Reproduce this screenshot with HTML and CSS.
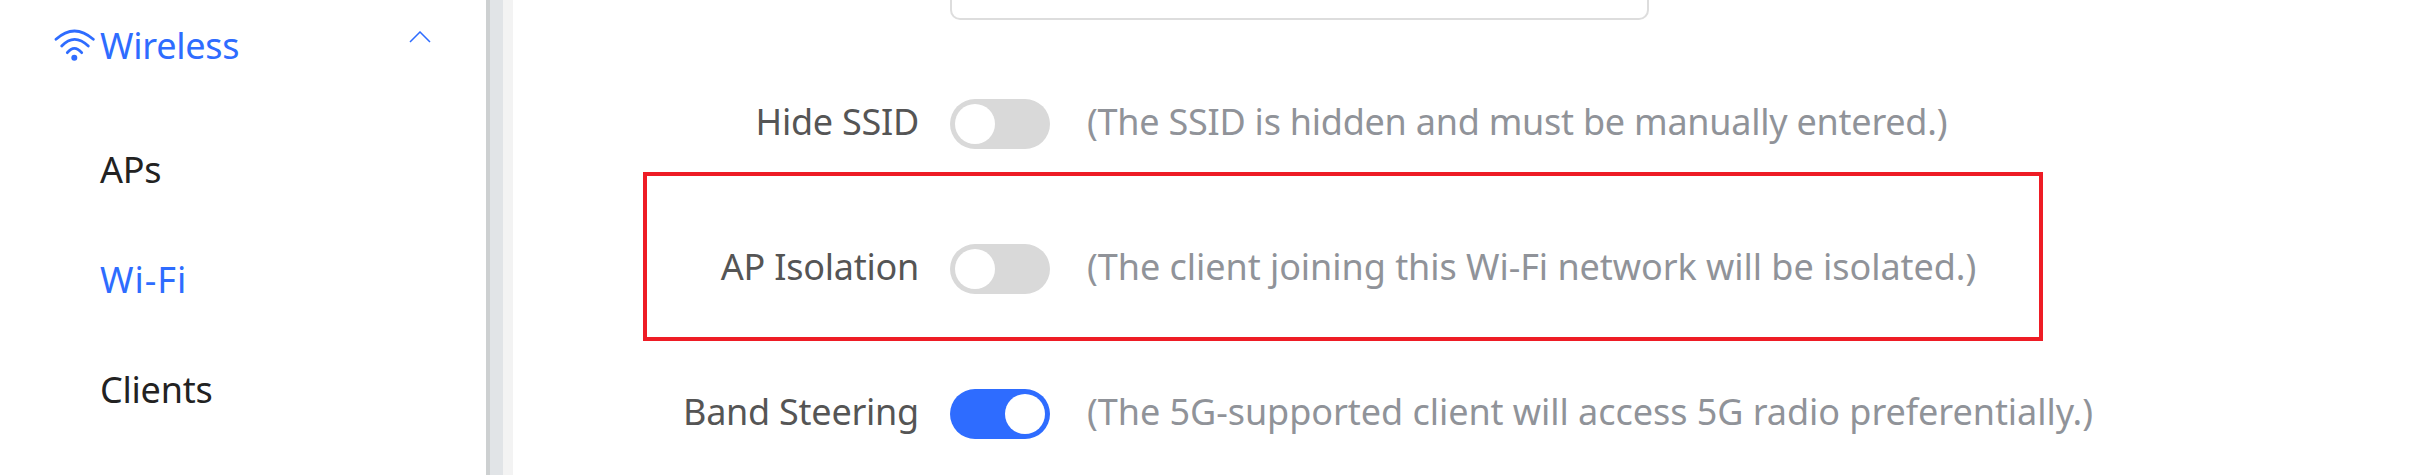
FILE: index.html
```html
<!DOCTYPE html>
<html lang="en">
<head>
  <meta charset="UTF-8" />
  <meta name="viewport" content="width=device-width, initial-scale=1.0" />
  <title>Wi-Fi</title>
  <link rel="stylesheet" href="styles.css">
</head>
<body>
  <div class="layout">
    <nav class="sidebar">
      <div class="nav-head">
        <svg class="wifi-icon" viewBox="0 0 42 32" fill="none" stroke="currentColor" stroke-width="2.8" stroke-linecap="round">
          <path d="M2 10.3Q20.3 -6.3 39.3 10.3" />
          <path d="M7.7 17Q20.3 3.6 34.3 17" />
          <path d="M13.3 23.7Q20.3 15 27.7 23.7" />
          <circle cx="20.3" cy="28.7" r="3" fill="currentColor" stroke="none" />
        </svg>
        <span>Wireless</span>
        <svg class="chevron" viewBox="0 0 22 12" fill="none" stroke="currentColor" stroke-width="1.5">
          <path d="M1 11L11 1L21 11" />
        </svg>
      </div>
      <a class="nav-item">APs</a>
      <a class="nav-item active">Wi-Fi</a>
      <a class="nav-item">Clients</a>
    </nav>
    <div class="rail"></div>
    <main class="content">
      <div class="ssid-input"></div>
      <div class="form-rows">
        <div class="form-row">
          <label>Hide SSID</label>
          <span class="switch"></span>
          <p class="hint tight">(The SSID is hidden and must be manually entered.)</p>
        </div>
        <div class="form-row">
          <label>AP Isolation</label>
          <span class="switch"></span>
          <p class="hint">(The client joining this Wi-Fi network will be isolated.)</p>
        </div>
        <div class="form-row">
          <label>Band Steering</label>
          <span class="switch on"></span>
          <p class="hint">(The 5G-supported client will access 5G radio preferentially.)</p>
        </div>
      </div>
      <div class="highlight"></div>
    </main>
  </div>
</body>
</html>
```

FILE: styles.css
```css
body {
  font-family: 'Noto Sans', sans-serif;
  font-size: 36px;
  letter-spacing: -0.25px;
  margin: 0;
  background: white;
  color: #222;
}
.layout {
  display: flex;
  height: 475px;
  overflow: hidden;
}
.sidebar {
  width: 486px;
  flex-shrink: 0;
}
.nav-head {
  display: flex;
  align-items: center;
  height: 60px;
  margin: 15px 0 40px;
  padding: 0 55px 0 54px;
  color: #2e6cff;
}
.wifi-icon {
  width: 42px;
  height: 32px;
  margin-right: 4px;
}
.chevron {
  width: 22px;
  height: 12px;
  margin-left: auto;
  margin-bottom: 17px;
}
.nav-item {
  display: block;
  height: 110px;
  line-height: 110px;
  padding-left: 100px;
}
.nav-item.active {
  color: #2e6cff;
  letter-spacing: 1px;
}
.rail {
  width: 27px;
  flex-shrink: 0;
  box-sizing: border-box;
  background: #e1e4e7;
  border-left: 4px solid #cdd0d1;
  border-right: 10px solid #f3f3f3;
}
.content {
  flex: 1;
  position: relative;
}
.ssid-input {
  width: 699px;
  height: 20px;
  box-sizing: border-box;
  margin-left: 437px;
  border: 2px solid #ddd;
  border-top: none;
  border-radius: 0 0 10px 10px;
}
.form-rows {
  display: flex;
  flex-direction: column;
  gap: 95px;
  margin-top: 79px;
}
.form-row {
  display: flex;
  align-items: center;
  height: 50px;
}
.form-row label {
  width: 406px;
  margin-bottom: 6px;
  text-align: right;
  color: #555;
}
.switch {
  display: flex;
  flex-shrink: 0;
  width: 100px;
  height: 50px;
  box-sizing: border-box;
  margin: 0 37px 0 31px;
  padding: 5px;
  border-radius: 25px;
  background: #d9d9d9;
}
.switch::after {
  content: "";
  width: 40px;
  height: 40px;
  border-radius: 50%;
  background: white;
}
.switch.on {
  background: #2e6cff;
  justify-content: flex-end;
}
.hint {
  margin: 0 0 6px;
  color: #909399;
  letter-spacing: -0.05px;
  white-space: nowrap;
}
.hint.tight {
  letter-spacing: -0.25px;
}
.highlight {
  position: absolute;
  left: 130px;
  top: 172px;
  width: 1400px;
  height: 169px;
  box-sizing: border-box;
  border: 4px solid #ee1c25;
}
```
